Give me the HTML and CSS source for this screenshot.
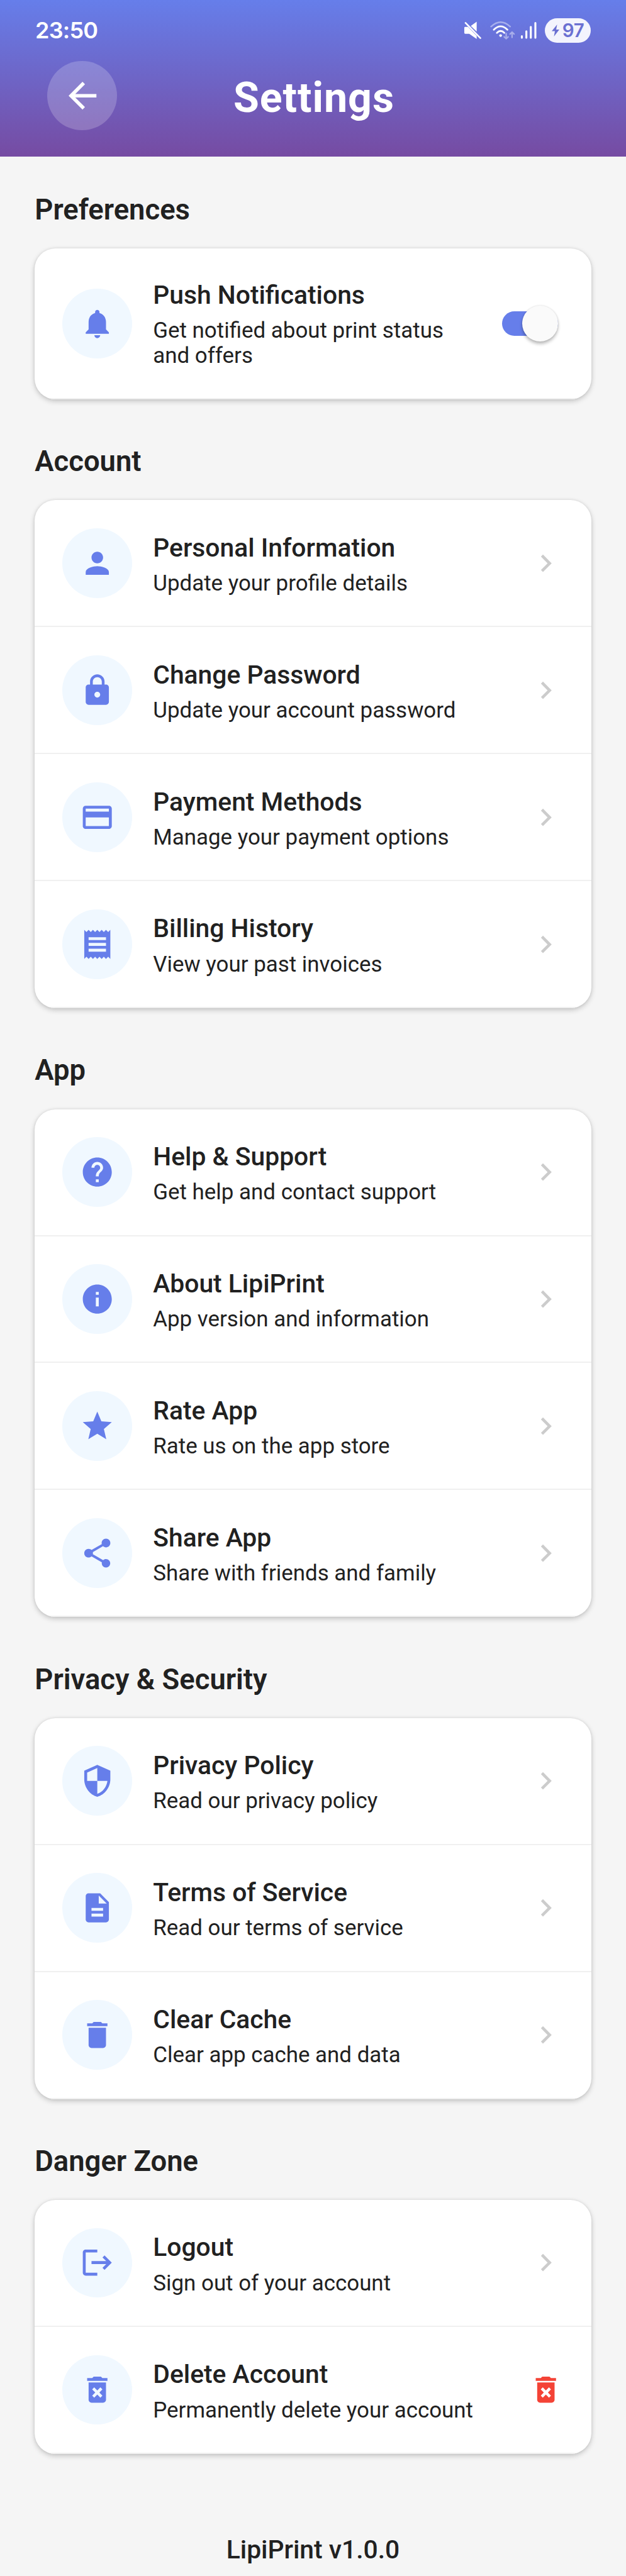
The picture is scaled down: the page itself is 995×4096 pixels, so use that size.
FILE: index.html
```html
<!DOCTYPE html>
<html lang="en">
<head>
<meta charset="utf-8">
<title>Settings</title>
<link rel="stylesheet" href="styles.css">
</head>
<body>
<svg class="sprite" aria-hidden="true">
  <symbol id="chevron" viewBox="0 0 24 24"><path d="M10 6 8.59 7.41 13.17 12l-4.58 4.59L10 18l6-6z"/></symbol>
  <symbol id="back" viewBox="0 0 24 24"><path d="M20 11H7.83l5.59-5.59L12 4l-8 8 8 8 1.41-1.41L7.83 13H20v-2z"/></symbol>
  <symbol id="bell" viewBox="0 0 24 24"><path d="M12 22c1.100 0 2-.9 2-2h-4c0 1.100.890 2 2 2zm6-6v-5c0-3.070-1.640-5.640-4.500-6.320V4c0-.830-.670-1.500-1.500-1.500s-1.500.670-1.500 1.500v.680C7.630 5.360 6 7.920 6 11v5l-2 2v1h16v-1l-2-2z"/></symbol>
  <symbol id="person" viewBox="0 0 24 24"><path d="M12 12c2.210 0 4-1.790 4-4s-1.790-4-4-4-4 1.790-4 4 1.790 4 4 4zm0 2c-2.670 0-8 1.340-8 4v2h16v-2c0-2.660-5.330-4-8-4z"/></symbol>
  <symbol id="lock" viewBox="0 0 24 24"><path d="M18 8h-1V6c0-2.760-2.240-5-5-5S7 3.240 7 6v2H6c-1.100 0-2 .9-2 2v10c0 1.100.9 2 2 2h12c1.100 0 2-.9 2-2V10c0-1.100-.9-2-2-2zm-6 9c-1.100 0-2-.9-2-2s.9-2 2-2 2 .9 2 2-.9 2-2 2zm3.100-9H8.900V6c0-1.710 1.390-3.100 3.100-3.100 1.710 0 3.100 1.390 3.100 3.100v2z"/></symbol>
  <symbol id="card" viewBox="0 0 24 24"><path d="M20 4H4c-1.110 0-1.990.890-1.990 2L2 18c0 1.110.890 2 2 2h16c1.110 0 2-.890 2-2V6c0-1.110-.890-2-2-2zm0 14H4v-6h16v6zm0-10H4V6h16v2z"/></symbol>
  <symbol id="receipt" viewBox="0 0 24 24"><path d="M18 17H6v-2h12v2zm0-4H6v-2h12v2zm0-4H6V7h12v2zM3 22l1.500-1.500L6 22l1.500-1.500L9 22l1.500-1.500L12 22l1.500-1.500L15 22l1.500-1.500L18 22l1.500-1.500L21 22V2l-1.500 1.500L18 2l-1.500 1.500L15 2l-1.500 1.500L12 2l-1.500 1.500L9 2 7.500 3.500 6 2 4.500 3.500 3 2v20z"/></symbol>
  <symbol id="help" viewBox="0 0 24 24"><path d="M12 2C6.480 2 2 6.480 2 12s4.480 10 10 10 10-4.480 10-10S17.520 2 12 2zm1 17h-2v-2h2v2zm2.070-7.750-.9.920C13.450 12.900 13 13.500 13 15h-2v-.5c0-1.100.450-2.100 1.170-2.830l1.240-1.260c.370-.360.590-.860.590-1.410 0-1.100-.9-2-2-2s-2 .9-2 2H8c0-2.210 1.790-4 4-4s4 1.790 4 4c0 .880-.360 1.680-.930 2.250z"/></symbol>
  <symbol id="info" viewBox="0 0 24 24"><path d="M12 2C6.480 2 2 6.480 2 12s4.480 10 10 10 10-4.480 10-10S17.520 2 12 2zm1 15h-2v-6h2v6zm0-8h-2V7h2v2z"/></symbol>
  <symbol id="star" viewBox="0 0 24 24"><path d="M12 17.270 18.180 21l-1.640-7.030L22 9.240l-7.190-.610L12 2 9.190 8.630 2 9.240l5.460 4.730L5.820 21z"/></symbol>
  <symbol id="share" viewBox="0 0 24 24"><path d="M18 16.080c-.760 0-1.440.3-1.960.770L8.910 12.700c.050-.230.090-.460.090-.7s-.040-.470-.090-.7l7.050-4.110c.540.5 1.250.810 2.040.810 1.660 0 3-1.340 3-3s-1.340-3-3-3-3 1.340-3 3c0 .240.040.470.090.7L8.040 9.810C7.500 9.310 6.790 9 6 9c-1.660 0-3 1.340-3 3s1.340 3 3 3c.790 0 1.500-.310 2.040-.810l7.120 4.160c-.050.210-.080.430-.080.650 0 1.610 1.310 2.920 2.920 2.920s2.920-1.310 2.920-2.920-1.310-2.920-2.920-2.920z"/></symbol>
  <symbol id="shield" viewBox="0 0 24 24"><path d="M12 1 3 5v6c0 5.550 3.840 10.740 9 12 5.160-1.260 9-6.450 9-12V5l-9-4zm0 10.990h7c-.530 4.120-3.280 7.790-7 8.940V12H5V6.300l7-3.110v8.800z"/></symbol>
  <symbol id="doc" viewBox="0 0 24 24"><path d="M14 2H6c-1.100 0-1.990.9-1.990 2L4 20c0 1.100.890 2 1.990 2H18c1.100 0 2-.9 2-2V8l-6-6zm2 16H8v-2h8v2zm0-4H8v-2h8v2zm-3-5V3.500L18.500 9H13z"/></symbol>
  <symbol id="trash" viewBox="0 0 24 24"><path d="M6 19c0 1.100.9 2 2 2h8c1.100 0 2-.9 2-2V7H6v12zM19 4h-3.500l-1-1h-5l-1 1H5v2h14V4z"/></symbol>
  <symbol id="logout" viewBox="0 0 24 24"><path d="m17 7-1.410 1.410L18.170 11H8v2h10.170l-2.580 2.580L17 17l5-5zM4 5h8V3H4c-1.100 0-2 .9-2 2v14c0 1.100.9 2 2 2h8v-2H4V5z"/></symbol>
  <symbol id="trash-x" viewBox="0 0 24 24"><path d="M6 19c0 1.100.9 2 2 2h8c1.100 0 2-.9 2-2V7H6v12zm2.460-7.120 1.410-1.410L12 12.590l2.120-2.120 1.410 1.410L13.410 14l2.120 2.120-1.410 1.410L12 15.410l-2.120 2.120-1.410-1.410L10.590 14l-2.130-2.120zM15.500 4l-1-1h-5l-1 1H5v2h14V4z"/></symbol>
</svg>

<header class="header">
  <div class="status">
    <span class="clock">23:50</span>
    <div class="indicators">
      <svg class="mute" viewBox="748 32 32 32"><path d="M760.500 41.500 770 34.500V50.500zM750 44.500Q750 43 751.500 43H756L770 57.500V62.500L758 54H751.500Q750 54 750 52.500z" fill="#fff"/><path d="M752 36.500 776 61" stroke="#fff" stroke-width="2.600" stroke-linecap="round"/></svg>
      <svg class="wifi" viewBox="789 32 44 32" fill="none" stroke="#fff" stroke-width="2.800" stroke-linecap="round"><g opacity=".42"><path d="M792.500 42.500Q808 28 823.500 42.500M817 53.500V61.500M813.800 59 817 62 820.200 59M826.500 60V51.500M823.300 54.500 826.500 51.300 829.700 54.500" stroke-width="2.300"/></g><path d="M797 47.500Q808 36.500 819 47.500M802 52.500Q808 46.500 814 52.500"/><circle cx="808" cy="57" r="2.200" fill="#fff" stroke="none"/></svg>
      <svg class="signal" viewBox="840 32 28 32" stroke="#fff" stroke-width="3.200" stroke-linecap="round"><path d="M842.500 58V60.500M849.800 50V60.500M857 43V60.500M864.400 36.500V60.500"/></svg>
      <div class="battery"><svg class="bolt" viewBox="0 0 12 19"><path d="M8.500 0 0 10.500h5L3.500 19 12 8H7z" fill="#6a70d2"/></svg><span>97</span></div>
    </div>
  </div>
  <div class="titlebar">
    <div class="backbtn"><svg><use href="#back"/></svg></div>
    <h1>Settings</h1>
  </div>
</header>

<main class="content">
  <h2>Preferences</h2>
  <section class="panel">
    <div class="row row-tall"><div class="ic"><svg><use href="#bell"/></svg></div><div class="txt"><h3>Push Notifications</h3><p>Get notified about print status<br>and offers</p></div><div class="switch"><i class="thumb"></i></div></div>
  </section>

  <h2>Account</h2>
  <section class="panel">
    <div class="row"><div class="ic"><svg><use href="#person"/></svg></div><div class="txt"><h3>Personal Information</h3><p>Update your profile details</p></div><svg class="go"><use href="#chevron"/></svg></div>
    <div class="row"><div class="ic"><svg><use href="#lock"/></svg></div><div class="txt"><h3>Change Password</h3><p>Update your account password</p></div><svg class="go"><use href="#chevron"/></svg></div>
    <div class="row"><div class="ic"><svg><use href="#card"/></svg></div><div class="txt"><h3>Payment Methods</h3><p>Manage your payment options</p></div><svg class="go"><use href="#chevron"/></svg></div>
    <div class="row"><div class="ic"><svg><use href="#receipt"/></svg></div><div class="txt"><h3>Billing History</h3><p>View your past invoices</p></div><svg class="go"><use href="#chevron"/></svg></div>
  </section>

  <h2>App</h2>
  <section class="panel">
    <div class="row"><div class="ic"><svg><use href="#help"/></svg></div><div class="txt"><h3>Help &amp; Support</h3><p>Get help and contact support</p></div><svg class="go"><use href="#chevron"/></svg></div>
    <div class="row"><div class="ic"><svg><use href="#info"/></svg></div><div class="txt"><h3>About LipiPrint</h3><p>App version and information</p></div><svg class="go"><use href="#chevron"/></svg></div>
    <div class="row"><div class="ic"><svg><use href="#star"/></svg></div><div class="txt"><h3>Rate App</h3><p>Rate us on the app store</p></div><svg class="go"><use href="#chevron"/></svg></div>
    <div class="row"><div class="ic"><svg><use href="#share"/></svg></div><div class="txt"><h3>Share App</h3><p>Share with friends and family</p></div><svg class="go"><use href="#chevron"/></svg></div>
  </section>

  <h2>Privacy &amp; Security</h2>
  <section class="panel">
    <div class="row"><div class="ic"><svg><use href="#shield"/></svg></div><div class="txt"><h3>Privacy Policy</h3><p>Read our privacy policy</p></div><svg class="go"><use href="#chevron"/></svg></div>
    <div class="row"><div class="ic"><svg><use href="#doc"/></svg></div><div class="txt"><h3>Terms of Service</h3><p>Read our terms of service</p></div><svg class="go"><use href="#chevron"/></svg></div>
    <div class="row"><div class="ic"><svg><use href="#trash"/></svg></div><div class="txt"><h3>Clear Cache</h3><p>Clear app cache and data</p></div><svg class="go"><use href="#chevron"/></svg></div>
  </section>

  <h2>Danger Zone</h2>
  <section class="panel">
    <div class="row"><div class="ic"><svg><use href="#logout"/></svg></div><div class="txt"><h3>Logout</h3><p>Sign out of your account</p></div><svg class="go"><use href="#chevron"/></svg></div>
    <div class="row"><div class="ic"><svg><use href="#trash-x"/></svg></div><div class="txt"><h3>Delete Account</h3><p>Permanently delete your account</p></div><svg class="go danger"><use href="#trash-x"/></svg></div>
  </section>

  <p class="version">LipiPrint v1.0.0</p>
</main>
</body>
</html>
```
FILE: styles.css
```css
* { box-sizing: border-box; margin: 0; padding: 0; }
body {
  width: 995px;
  height: 4096px;
  overflow: hidden;
  background: #f5f5f5;
  color: #212121;
  font-family: Roboto, "Liberation Sans", sans-serif;
}
svg { display: block; flex: none; }
.sprite { width: 0; height: 0; position: absolute; }

.header {
  height: 248.8px;
  background: linear-gradient(#667eea, #764ba2);
  color: #fff;
}
.status {
  height: 96px;
  padding: 0 56px 0 56px;
  display: flex;
  align-items: center;
  justify-content: space-between;
}
.clock {
  font: 600 36px/40px Inter, Roboto, sans-serif;
  letter-spacing: -0.8px;
}
.indicators { display: flex; align-items: center; }
.mute { width: 31.5px; height: 31.5px; margin-right: 9px; }
.wifi { width: 43.3px; height: 31.5px; margin-right: 7px; }
.signal { width: 27.5px; height: 31.5px; margin-right: 11.5px; }
.battery {
  width: 73px;
  height: 39px;
  border-radius: 20px;
  background: #f3f4fd;
  color: #6a70d2;
  display: flex;
  align-items: center;
  justify-content: center;
  gap: 5px;
  font: 600 29.5px/39px Inter, Roboto, sans-serif;
  letter-spacing: -0.5px;
}
.bolt { width: 12px; height: 19px; }
.titlebar {
  height: 112px;
  padding: 0 75.4px;
  display: grid;
  grid-template-columns: 110.6px 1fr 110.6px;
  align-items: center;
}
.backbtn {
  width: 110.6px;
  height: 110.6px;
  border-radius: 50%;
  background: rgba(255, 255, 255, 0.2);
  display: grid;
  place-items: center;
}
.backbtn svg { width: 66.3px; height: 66.3px; fill: #fff; }
h1 {
  font-size: 66.3px;
  line-height: 78px;
  font-weight: 700;
  letter-spacing: 1px;
  text-align: center;
  padding: 5px 0 0 3px;
}

.content { padding: 58.5px 55.3px 0; }
h2 {
  font-size: 45.4px;
  line-height: 54px;
  font-weight: 600;
  margin-bottom: 34.2px;
}
.panel + h2 { margin-top: 72.2px; }
.panel {
  border-radius: 33.2px;
  overflow: hidden;
  background: #fff;
  box-shadow: 0 3px 8px rgba(0, 0, 0, 0.2), 0 0 4px rgba(0, 0, 0, 0.08);
}
.row {
  height: 201.95px;
  padding: 0 44.2px;
  border-bottom: 2.8px solid #f0f0f0;
  display: flex;
  align-items: center;
}
.row-tall { height: 239.6px; }
.ic {
  flex: none;
  width: 110.6px;
  height: 110.6px;
  border-radius: 50%;
  background: #f0f8ff;
  display: grid;
  place-items: center;
}
.ic svg, .go { width: 55.3px; height: 55.3px; fill: #667eea; }
.go { fill: #ccc; }
.danger { fill: #f44336; }
.txt { flex: 1; margin-left: 33.2px; padding-top: 5px; }
.row-tall .txt { padding-top: 3px; }
h3 { font-size: 40.8px; line-height: 47px; font-weight: 500; margin-bottom: 13.5px; }
.txt p { font-size: 34.9px; line-height: 40px; white-space: nowrap; }
.switch {
  flex: none;
  width: 88.5px;
  height: 39px;
  margin-right: 8.8px;
  border-radius: 20px;
  background: #667eea;
  display: flex;
  align-items: center;
  justify-content: flex-end;
}
.thumb {
  width: 57px;
  height: 57px;
  border-radius: 50%;
  background: #fafafa;
  box-shadow: 0 4px 5px rgba(0, 0, 0, 0.25), 0 0 3px rgba(0, 0, 0, 0.15);
}
.version {
  margin-top: 125.5px;
  font-size: 40.8px;
  line-height: 54px;
  font-weight: 500;
  text-align: center;
}
```
